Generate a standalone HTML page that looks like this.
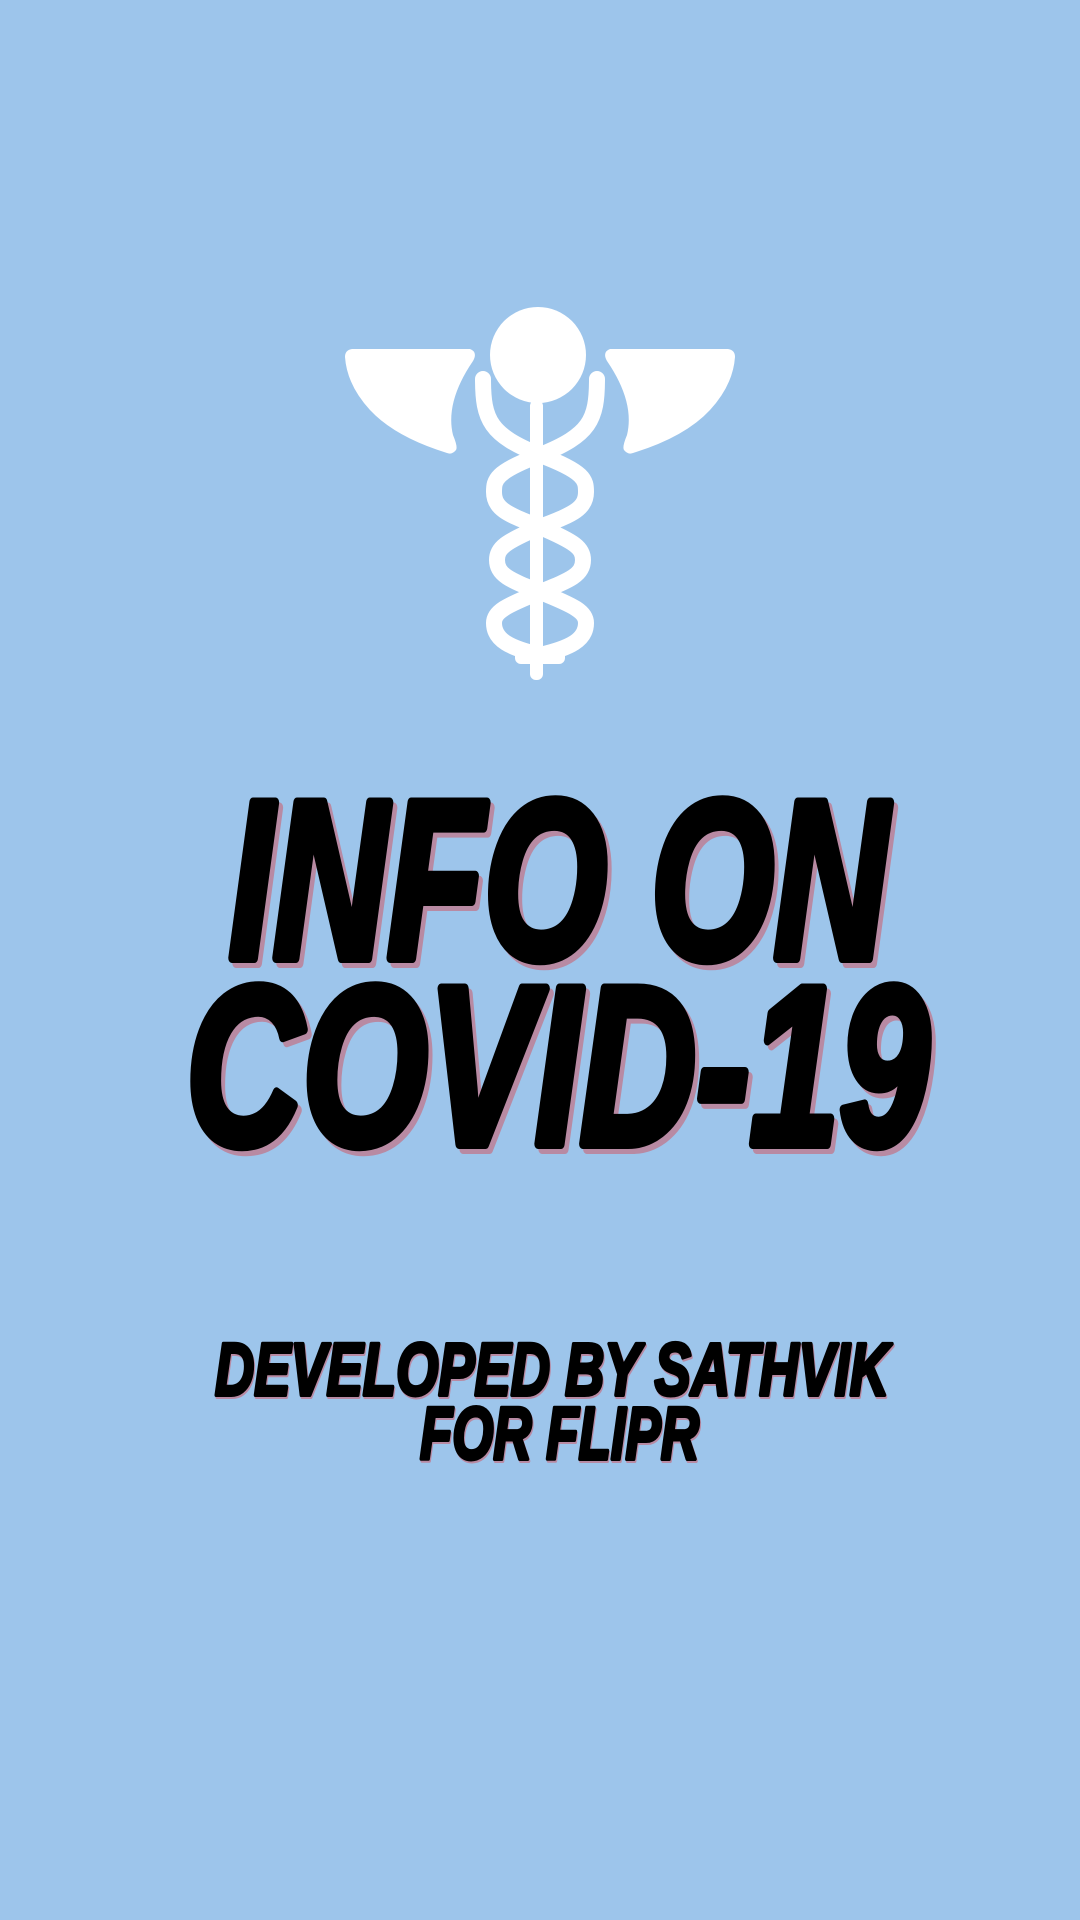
<!DOCTYPE html>
<html><head><meta charset="utf-8"><style>
html,body{margin:0;padding:0;background:#9dc5eb;}
svg{display:block}
text{font-family:"Liberation Sans",sans-serif;font-weight:bold;font-style:italic;stroke-linejoin:round;}
</style></head><body>
<svg width="1080" height="1920" viewBox="0 0 1080 1920" xmlns="http://www.w3.org/2000/svg">
<rect width="1080" height="1920" fill="#9dc5eb"/>
<g fill="#fff">
<circle cx="538" cy="355" r="48"/>
<path d="M352,349 L470,349 Q478,352 473,361 Q445,402 453,435 Q458,447 456,450 Q452,455 447,453 Q395,437 370,410 Q347,385 345,357 Q345,350 352,349Z"/>
<path d="M728,349 L610,349 Q602,352 607,361 Q635,402 627,435 Q622,447 624,450 Q628,455 633,453 Q685,437 710,410 Q733,385 735,357 Q735,350 728,349Z"/>
<rect x="530" y="400" width="13" height="280" rx="6"/>
<rect x="515" y="650" width="50" height="14" rx="6"/>
</g>
<g fill="none" stroke="#fff" stroke-width="16" stroke-linecap="round">
<path d="M483,379 C483,420 490,435 540,455 C585,472 586,480 586,492 C586,510 570,515 540,527 C505,542 497,548 497,560 C497,575 510,580 540,592 C575,606 586,612 586,623 C586,640 570,648 540,655"/>
<path d="M597,379 C597,420 590,435 540,455 C495,472 494,480 494,492 C494,510 510,515 540,527 C575,542 583,548 583,560 C583,575 570,580 540,592 C505,606 494,612 494,623 C494,640 510,648 540,655"/>
</g>
<g fill="#b88aa3" stroke="#b88aa3">
<text x="233" y="963" font-size="226" stroke-width="10" textLength="659" lengthAdjust="spacingAndGlyphs">INFO ON</text>
<text x="190" y="1149" font-size="226" stroke-width="10" textLength="743" lengthAdjust="spacingAndGlyphs">COVID-19</text>
<text x="216" y="1397" font-size="74" stroke-width="4" textLength="674" lengthAdjust="spacingAndGlyphs">DEVELOPED BY SATHVIK</text>
<text x="421" y="1461" font-size="74" stroke-width="4" textLength="279" lengthAdjust="spacingAndGlyphs">FOR FLIPR</text>
</g>
<g fill="#000" stroke="#000">
<text x="229" y="958" font-size="226" stroke-width="10" textLength="659" lengthAdjust="spacingAndGlyphs">INFO ON</text>
<text x="186" y="1144" font-size="226" stroke-width="10" textLength="743" lengthAdjust="spacingAndGlyphs">COVID-19</text>
<text x="215" y="1395" font-size="74" stroke-width="4" textLength="674" lengthAdjust="spacingAndGlyphs">DEVELOPED BY SATHVIK</text>
<text x="420" y="1459" font-size="74" stroke-width="4" textLength="279" lengthAdjust="spacingAndGlyphs">FOR FLIPR</text>
</g>
</svg>
</body></html>
